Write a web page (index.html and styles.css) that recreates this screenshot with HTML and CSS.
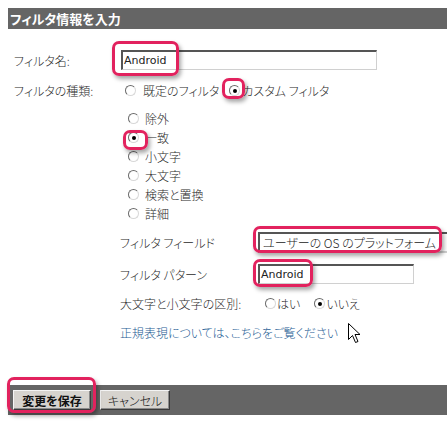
FILE: index.html
```html
<!DOCTYPE html>
<html lang="ja">
<head>
<meta charset="utf-8">
<link rel="stylesheet" href="styles.css">
</head>
<body>
<div class="page">
  <div class="header">フィルタ情報を入力</div>
  <div class="form">
    <div class="row">
      <div class="label">フィルタ名:</div>
      <div class="textbox wide">Android</div>
    </div>
    <div class="row">
      <div class="label">フィルタの種類:</div>
      <div class="choices">
        <span class="radio first"></span><span class="opt">既定のフィルタ</span>
        <span class="radio checked second"></span><span class="opt">カスタム フィルタ</span>
      </div>
    </div>
    <div class="sub">
      <ul class="options">
        <li><span class="radio"></span><span class="opt">除外</span></li>
        <li><span class="radio checked"></span><span class="opt">一致</span></li>
        <li><span class="radio"></span><span class="opt">小文字</span></li>
        <li><span class="radio"></span><span class="opt">大文字</span></li>
        <li><span class="radio"></span><span class="opt">検索と置換</span></li>
        <li><span class="radio"></span><span class="opt">詳細</span></li>
      </ul>
      <div class="subrow tall first-sub">
        <div class="sublabel">フィルタ フィールド</div>
        <div class="select">ユーザーの OS のプラットフォーム</div>
      </div>
      <div class="subrow tall">
        <div class="sublabel">フィルタ パターン</div>
        <div class="textbox pattern">Android</div>
      </div>
      <div class="subrow short">
        <div class="sublabel">大文字と小文字の区別:</div>
        <div class="choices case">
          <span class="radio"></span><span class="opt yes">はい</span>
          <span class="radio checked"></span><span class="opt">いいえ</span>
        </div>
      </div>
      <div class="subrow tall">
        <a class="link">正規表現については、こちらをご覧ください</a>
      </div>
    </div>
  </div>
  <div class="footer">
    <span class="button save">変更を保存</span>
    <span class="button cancel">キャンセル</span>
  </div>

  <div class="hl hl-name"></div>
  <div class="hl hl-custom"></div>
  <div class="hl hl-match"></div>
  <div class="hl hl-field"></div>
  <div class="hl hl-pattern"></div>
  <div class="hl hl-save"></div>

  <svg class="cursor" width="13" height="21" viewBox="0 0 13 21">
    <path d="M0.5 0.5 L0.5 16.5 L4.5 12.5 L7.5 19.5 L10 18.5 L7 11.5 L12 11.5 Z" fill="#fff" stroke="#000" stroke-width="1"/>
  </svg>
</div>
</body>
</html>
```

FILE: styles.css
```css
html, body {
  margin: 0;
  padding: 0;
  background: #fff;
}

body {
  font-family: "Noto Sans CJK JP", sans-serif;
  font-size: 12px;
  font-weight: 300;
  color: #2a2a2a;
  font-feature-settings: "palt";
}

.page {
  position: relative;
  width: 447px;
  height: 423px;
  padding: 8px 0 0 8px;
  box-sizing: border-box;
  overflow: hidden;
}

.header {
  height: 21px;
  background: #656565;
  color: #fff;
  font-weight: bold;
  font-size: 13px;
  line-height: 22px;
  padding-left: 2px;
}

.form {
  padding: 16px 0 0 6px;
}

.row {
  display: flex;
  align-items: center;
  height: 30px;
}

.label {
  width: 107px;
  flex: none;
}

.textbox {
  height: 20px;
  box-sizing: border-box;
  border: 1px solid;
  border-color: #555 #d0d0d0 #d0d0d0 #555;
  border-top-width: 2px;
  border-left-width: 2px;
  font-family: "DejaVu Sans", sans-serif;
  font-weight: normal;
  font-size: 11px;
  line-height: 17px;
  padding-left: 1px;
  color: #222;
  background: #fff;
}

.wide {
  width: 256px;
}

.pattern {
  width: 156px;
}

.choices {
  display: flex;
  align-items: center;
}

.radio {
  position: relative;
  display: inline-block;
  width: 11px;
  height: 11px;
  box-sizing: border-box;
  border-radius: 50%;
  border: 1px solid;
  border-color: #6a6a6a #d8d8d8 #d8d8d8 #6a6a6a;
  background: #fff;
  flex: none;
}

.radio.checked::after {
  content: "";
  position: absolute;
  left: 3px;
  top: 3px;
  width: 4px;
  height: 4px;
  border-radius: 50%;
  background: #000;
}

.radio.first {
  margin-left: 4px;
  margin-right: 7px;
}

.radio.second {
  margin-left: 10px;
  margin-right: 2px;
}

.opt {
  margin-left: 6px;
}

.choices .opt {
  margin-left: 0;
}

.sub {
  margin-top: 4px;
  padding-left: 106px;
}

.options {
  list-style: none;
  margin: 0;
  padding: 0 0 0 8px;
}

.options li {
  display: flex;
  align-items: center;
  height: 19px;
}

.subrow {
  display: flex;
  align-items: center;
}

.subrow.tall {
  height: 32px;
}

.subrow.short {
  height: 26px;
}

.first-sub {
  margin-top: 3px;
}

.sublabel {
  width: 138px;
  flex: none;
}

.select {
  width: 220px;
  height: 21px;
  box-sizing: border-box;
  border: 2px solid;
  border-color: #555 #d0d0d0 #d0d0d0 #555;
  border-right: none;
  line-height: 17px;
  padding-left: 3px;
  white-space: nowrap;
  overflow: hidden;
  color: #222;
  flex: none;
}

.case .radio {
  margin-left: 7px;
  margin-right: 1px;
}

.case .opt.yes {
  margin-right: 7px;
}

.link {
  color: #1d5c93;
  text-decoration: none;
}

.footer {
  margin-top: 37px;
  height: 30px;
  background: #656565;
  display: flex;
  align-items: center;
  gap: 9px;
  padding-left: 5px;
}

.button {
  display: flex;
  align-items: center;
  justify-content: center;
  height: 20px;
  box-sizing: border-box;
  background: #d6d3ce;
  border: 1px solid;
  border-color: #f4f4f4 #3a3a3a #3a3a3a #f4f4f4;
  box-shadow: inset -1px -1px 0 #8a8a8a;
  color: #111;
  font-size: 12px;
}

.save {
  width: 78px;
  font-weight: bold;
}

.cancel {
  width: 70px;
}

.hl {
  position: absolute;
  box-sizing: border-box;
  border: 3px solid #e2225e;
  border-radius: 7px;
  box-shadow: 2px 3px 4px rgba(0, 0, 0, 0.35);
}

.hl-name {
  left: 112px;
  top: 41px;
  width: 67px;
  height: 35px;
}

.hl-custom {
  left: 222px;
  top: 78px;
  width: 23px;
  height: 21px;
}

.hl-match {
  left: 123px;
  top: 130px;
  width: 25px;
  height: 20px;
}

.hl-field {
  left: 253px;
  top: 226px;
  width: 189px;
  height: 27px;
}

.hl-pattern {
  left: 253px;
  top: 259px;
  width: 60px;
  height: 28px;
}

.hl-save {
  left: 7px;
  top: 377px;
  width: 89px;
  height: 36px;
}

.cursor {
  position: absolute;
  left: 348px;
  top: 323px;
}
```
